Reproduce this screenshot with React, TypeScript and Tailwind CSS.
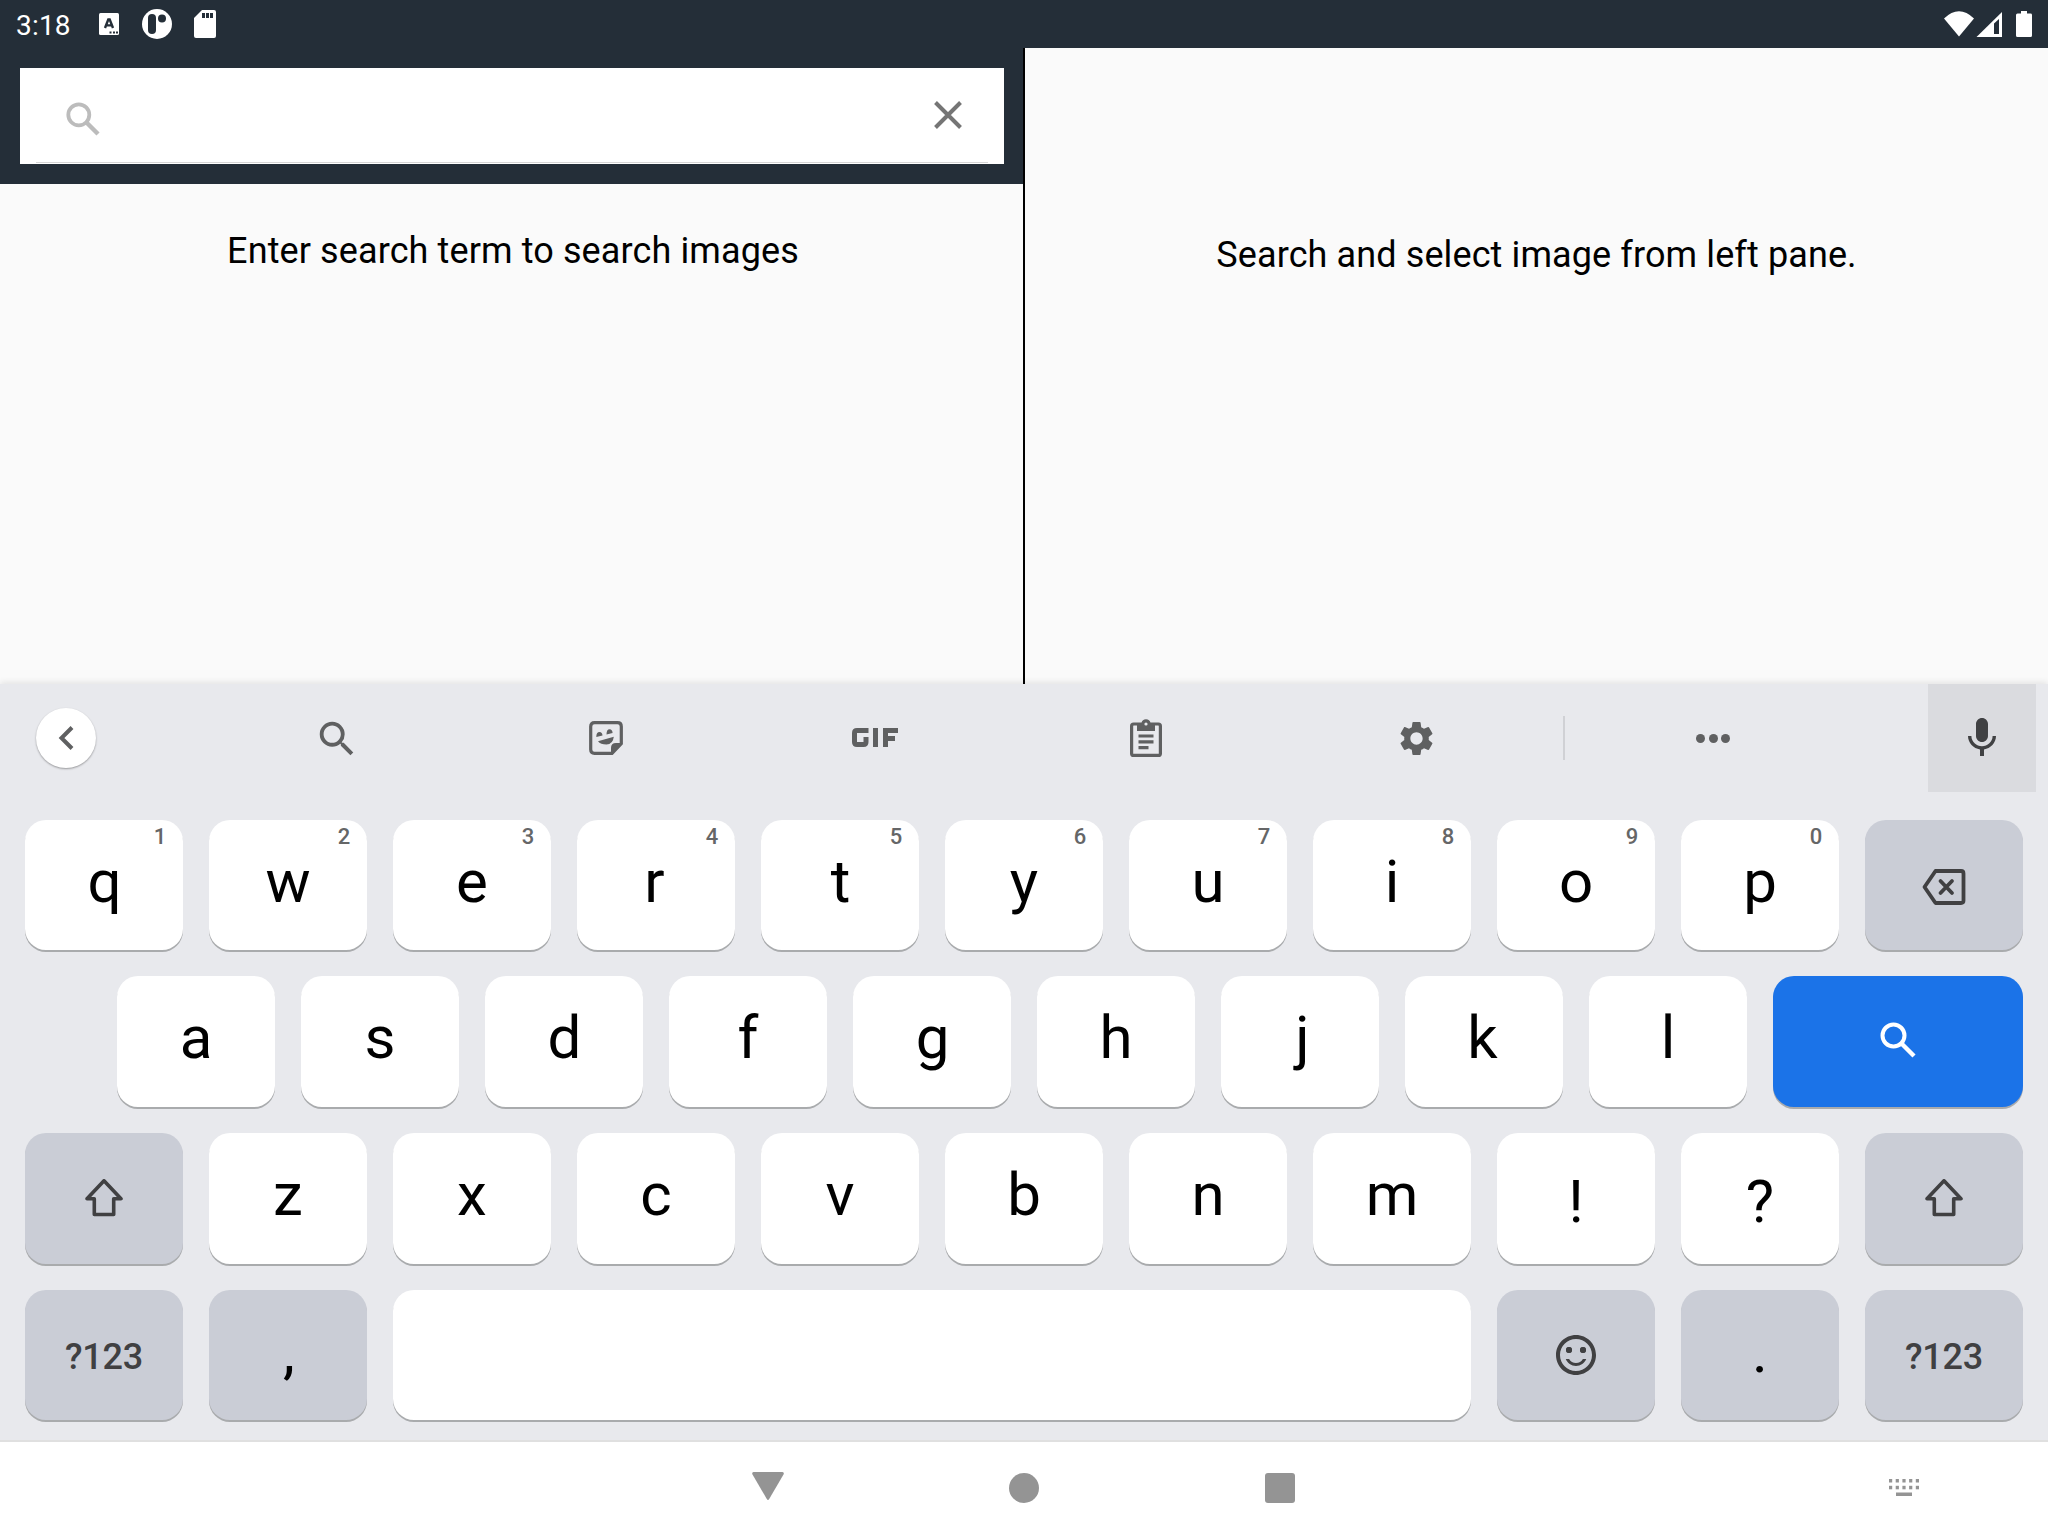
import React from "react";
import {
  MdSearch,
  MdMic,
  MdSettings,
  MdSentimentSatisfiedAlt,
} from "react-icons/md";

function StatusBar() {
  return (
    <header className="flex h-12 items-center justify-between bg-[#242e38] text-white">
      <div className="flex items-center">
        <span className="ml-4 mt-[3px] w-[83px] text-[28px] leading-[45px] tracking-[0.2px]">3:18</span>
        <svg className="h-[22px] w-5 -mt-px" viewBox="0 0 20 22">
          <rect width="20" height="22" rx="1.5" fill="#fff" />
          <path d="M6 15 L9.3 6.5 H10.7 L14 15 M7.4 12.4 H12.6" fill="none" stroke="#242e38" strokeWidth="2.4" />
          <path d="M10.5 18.6h2v2h-2zM14 18.6h2v2h-2zM17 18.6h2v2h-2z" fill="#242e38" />
        </svg>
        <svg className="ml-[23px] h-[30px] w-[30px]" viewBox="0 0 30 30">
          <circle cx="15" cy="15" r="15" fill="#fff" />
          <rect x="6" y="5" width="8" height="20" rx="4" fill="#242e38" />
          <circle cx="20" cy="9.5" r="4" fill="#242e38" />
        </svg>
        <svg className="ml-[22px] h-7 w-[22px]" viewBox="0 0 22 28">
          <path d="M8 0H20a2 2 0 0 1 2 2V26a2 2 0 0 1-2 2H2a2 2 0 0 1-2-2V8Z" fill="#fff" />
          <path d="M8 3h3v5H8zM12 3h3v5h-3zM16 3h3v5h-3z" fill="#242e38" />
        </svg>
      </div>
      <svg className="mr-4 h-[26px] w-[88px]" viewBox="1944 11 88 26">
        <path d="M1944 18.5Q1959 4 1974 18.5L1959 36.5Z" fill="#fff" />
        <path d="M2002 12V37H1976.500Z" fill="#fff" />
        <path d="M1999 19V34H1994V23.500Z" fill="#242e38" />
        <path d="M2017.500 13.500H2021V11H2027V13.500H2030.500A1.500 1.500 0 0 1 2032 15V35.500A1.500 1.500 0 0 1 2030.500 37H2017.500A1.500 1.500 0 0 1 2016 35.500V15A1.500 1.500 0 0 1 2017.500 13.500Z" fill="#fff" />
      </svg>
    </header>
  );
}

function SearchPane() {
  return (
    <section className="w-[1023px]">
      <div className="h-[136px] bg-[#242e38] pl-5 pr-[19px] pt-5">
        <div className="relative flex h-24 items-start justify-between bg-white">
          <svg className="ml-[46px] mt-[34px] h-[34px] w-[34px]" viewBox="0 0 34 34" fill="none" stroke="#bcbcbc">
            <circle cx="12.800" cy="12.800" r="10.500" strokeWidth="3.800" />
            <path d="M20.500 20.500L32 32" strokeWidth="4.400" />
          </svg>
          <svg className="mr-[42px] mt-[33px] h-7 w-7" viewBox="0 0 28 28" fill="none" stroke="#757575">
            <path d="M1.500 1.500L26.500 26.500M26.500 1.500L1.500 26.500" strokeWidth="4" />
          </svg>
          <div className="absolute bottom-px left-4 right-4 h-px bg-[#d6d6d6]" />
        </div>
      </div>
      <p className="mt-[43px] pl-[3px] text-center text-[36px] leading-[48px] tracking-[0.11px] text-black">
        Enter search term to search images
      </p>
    </section>
  );
}

function DetailPane() {
  return (
    <section className="flex-1 border-l-2 border-black">
      <p className="mt-[183px] text-center text-[36px] leading-[48px] tracking-[0.11px] text-black">
        Search and select image from left pane.
      </p>
    </section>
  );
}

function StickerIcon() {
  return (
    <svg className="h-[34px] w-[34px]" viewBox="0 0 34 34">
      <path d="M5.500 1.700H28.500Q32.300 1.700 32.300 5.500V22.500L23 32.300H5.500Q1.700 32.300 1.700 28.500V5.500Q1.700 1.700 5.500 1.700Z" fill="none" stroke="#5f6061" strokeWidth="3.200" />
      <path d="M22 33V27Q22 22 27 22H33Z" fill="#5f6061" />
      <path d="M7.300 16Q7.300 11 10.500 11Q13.300 11 13.500 14.500ZM17.500 13.500Q17.500 8.300 20.600 8.300Q23.300 8.300 23.600 11.900Z" fill="#5f6061" />
      <path d="M9 20.200L24.800 15.700Q24 23 17.500 23.500Q11.500 23.500 9 20.200Z" fill="#5f6061" />
    </svg>
  );
}

function ClipboardIcon() {
  return (
    <svg className="h-[38px] w-8" viewBox="0 0 32 38" fill="none" stroke="#5f6061">
      <rect x="1.600" y="5" width="28.800" height="31.400" rx="2" strokeWidth="3.200" />
      <path d="M7 4H11.500a4.600 4.600 0 0 1 9 0H25V12H7Z" fill="#5f6061" stroke="none" />
      <circle cx="16" cy="5" r="1.600" fill="#e8e9ed" stroke="none" />
      <path d="M8.500 17H23.500M8.500 22.800H23.500M8.500 28.600H18.500" strokeWidth="3.200" />
    </svg>
  );
}

function Toolbar() {
  return (
    <div className="flex h-[108px] items-center text-[#5f6061]">
      <div className="ml-9 flex h-[60px] w-[60px] items-center justify-center rounded-full bg-white shadow-[0_1px_2px_rgba(0,0,0,0.35)]">
        <svg className="-mt-px mr-px h-6 w-4" viewBox="0 0 16 24" fill="none" stroke="#5f6061" strokeWidth="4">
          <path d="M14 1.500L3.500 12L14 22.500" />
        </svg>
      </div>
      <div className="ml-[105px] flex w-[271px] justify-center pt-0.5">
        <MdSearch size={46} />
      </div>
      <div className="flex w-[268px] justify-center"><StickerIcon /></div>
      <div className="flex w-[270px] justify-center pb-px pr-px">
        <svg className="h-[19px] w-[46px]" viewBox="0 0 46 19" fill="none" stroke="currentColor" strokeWidth="5">
          <path d="M16.500 2.500H5Q2.500 2.500 2.500 5V14Q2.500 16.500 5 16.500H11.500Q14 16.500 14 14V9M23.500 0V19M33.500 19V2.500H46M33 10.500H43" />
        </svg>
      </div>
      <div className="flex w-[271px] justify-center"><ClipboardIcon /></div>
      <div className="flex w-[271px] justify-center pt-px"><MdSettings size={41} /></div>
      <div className="ml-[11px] h-11 w-0.5 bg-[#d0d1d5]" />
      <div className="ml-[131px] flex w-[34px] justify-between">
        <i className="h-[9px] w-[9px] rounded-full bg-[#5f6061]" />
        <i className="h-[9px] w-[9px] rounded-full bg-[#5f6061]" />
        <i className="h-[9px] w-[9px] rounded-full bg-[#5f6061]" />
      </div>
      <div className="ml-auto mr-3 flex h-[108px] w-[108px] items-center justify-center bg-[#dadbdf] pb-px text-[#404143]">
        <MdMic size={48} />
      </div>
    </div>
  );
}

type KeyProps = {
  children?: React.ReactNode;
  hint?: string;
  tone?: "light" | "gray" | "blue";
  width?: string;
};

const tones = {
  light: "bg-white text-black",
  gray: "bg-[#cacdd6] text-[#404042]",
  blue: "bg-[#1b73e8] text-white",
};

function Key({ children, hint, tone = "light", width = "w-[158px]" }: KeyProps) {
  return (
    <div className={`relative flex h-full items-center justify-center rounded-[21px] shadow-[0_2px_0_#a9abad] ${width} ${tones[tone]}`}>
      {children}
      {hint && (
        <span className="absolute right-3 top-[5px] w-[22px] text-center text-[22px] font-medium leading-6 text-[#656667]">{hint}</span>
      )}
    </div>
  );
}

const opticalShift: Record<string, string> = {
  q: "pl-px",
  r: "pr-[3px]",
  t: "pl-px",
  d: "pl-px",
  g: "pl-px",
  j: "pl-[5px]",
  k: "pr-[3px]",
  ",": "pl-[2px]",
};

function Letter({ c }: { c: string }) {
  return <span className={`-mt-[7px] text-[60px] leading-[70px] text-black ${opticalShift[c] ?? ""}`}>{c}</span>;
}

function Mark({ c }: { c: string }) {
  return <span className="mt-[6px] text-[60px] leading-[70px] text-black">{c}</span>;
}

function SymbolsLabel() {
  return <span className="mt-[3px] text-[36px] font-medium leading-[42px] tracking-[-0.2px]">?123</span>;
}

function ShiftIcon() {
  return (
    <svg className="-mt-px h-[38px] w-[38px]" viewBox="0 0 38 38" fill="none" stroke="currentColor" strokeWidth="3.600" strokeLinejoin="round">
      <path d="M19 1.800L36 19.800H28.700V35.500H9.300V19.800H2Z" />
    </svg>
  );
}

function Keyboard() {
  return (
    <section className="relative h-[756px] bg-[#e8e9ed] shadow-[0_-2px_6px_rgba(0,0,0,0.09)]">
      <Toolbar />
      <div className="mt-7 flex flex-col gap-[26px] pl-[25px]">
        <div className="flex h-[130px] gap-[26px]">
          {"qwertyuiop".split("").map((c, i) => (
            <Key key={c} hint={String((i + 1) % 10)}><Letter c={c} /></Key>
          ))}
          <Key tone="gray">
            <svg className="mt-[3px] h-9 w-11" viewBox="0 0 44 36" fill="none" stroke="currentColor" strokeWidth="3.800" strokeLinejoin="round" strokeLinecap="round">
              <path d="M13.500 2H39Q41.500 2 41.500 4.500V31.500Q41.500 34 39 34H13.500L2.500 18Z" />
              <path d="M18.500 12L30 24M30 12L18.500 24" />
            </svg>
          </Key>
        </div>
        <div className="ml-[92px] flex h-[131px] gap-[26px]">
          {"asdfghjkl".split("").map((c) => (
            <Key key={c}><Letter c={c} /></Key>
          ))}
          <Key tone="blue" width="w-[250px]">
            <svg className="-mt-1 h-9 w-9" viewBox="0 0 36 36" fill="none" stroke="currentColor">
              <circle cx="13.500" cy="13.500" r="11" strokeWidth="4" />
              <path d="M22 22L34 34" strokeWidth="4.400" />
            </svg>
          </Key>
        </div>
        <div className="flex h-[131px] gap-[26px]">
          <Key tone="gray"><ShiftIcon /></Key>
          {"zxcvbnm".split("").map((c) => (
            <Key key={c}><Letter c={c} /></Key>
          ))}
          <Key><Mark c="!" /></Key>
          <Key><Mark c="?" /></Key>
          <Key tone="gray"><ShiftIcon /></Key>
        </div>
        <div className="flex h-[130px] gap-[26px]">
          <Key tone="gray"><SymbolsLabel /></Key>
          <Key tone="gray"><Letter c="," /></Key>
          <Key width="w-[1078px]" />
          <Key tone="gray"><MdSentimentSatisfiedAlt size={48} /></Key>
          <Key tone="gray"><Letter c="." /></Key>
          <Key tone="gray"><SymbolsLabel /></Key>
        </div>
      </div>
    </section>
  );
}

function NavigationBar() {
  return (
    <nav className="relative flex h-24 items-start border-t-2 border-[#e0e0e0] bg-white">
      <svg className="ml-[752px] mt-[30px] h-7 w-8" viewBox="0 0 32 28">
        <path d="M1.500 0H30.500Q32.500 0.500 31.500 2.500L17.200 27Q16 28.800 14.800 27L0.500 2.500Q-0.500 0.500 1.500 0Z" fill="#949494" />
      </svg>
      <div className="ml-[225px] mt-[31px] h-[30px] w-[30px] rounded-full bg-[#949494]" />
      <div className="ml-[226px] mt-[31px] h-[30px] w-[30px] rounded-[3px] bg-[#949494]" />
      <svg className="ml-[594px] mt-[37px] h-[17px] w-[30px]" viewBox="0 0 30 17" fill="#949494">
        {[0, 6.7, 13.4, 20.1, 26.8].map((x) => (
          <g key={x}>
            <rect x={x} y="0" width="3.200" height="3.500" />
            <rect x={x} y="6.800" width="3.200" height="3.500" />
          </g>
        ))}
        <rect x="7" y="13.500" width="16" height="3.500" />
      </svg>
    </nav>
  );
}

export default function App() {
  return (
    <div className="flex h-[1536px] w-[2048px] flex-col overflow-hidden bg-[#fafafa] font-['Roboto',sans-serif]">
      <StatusBar />
      <main className="flex h-[636px]">
        <SearchPane />
        <DetailPane />
      </main>
      <Keyboard />
      <NavigationBar />
    </div>
  );
}
